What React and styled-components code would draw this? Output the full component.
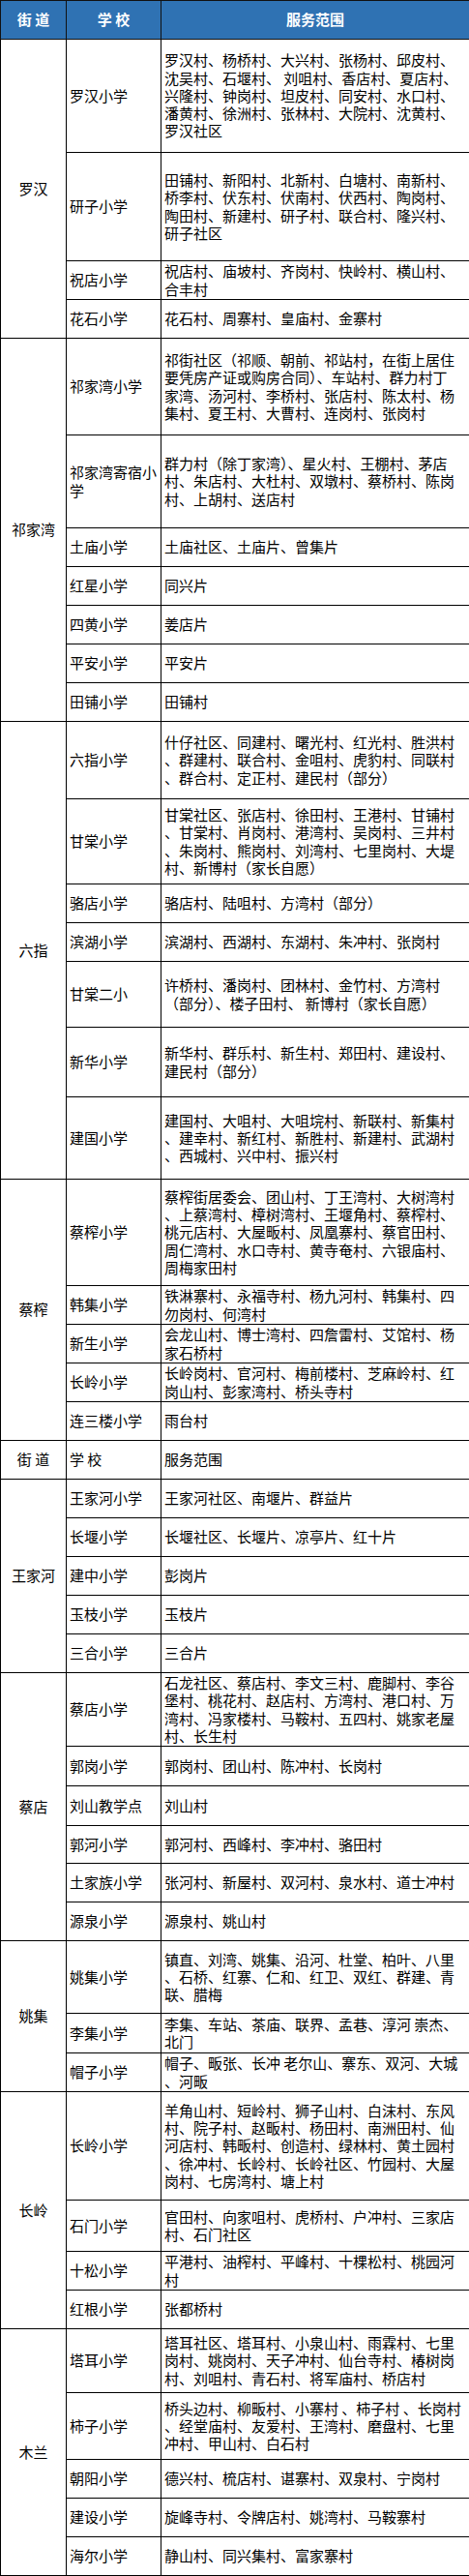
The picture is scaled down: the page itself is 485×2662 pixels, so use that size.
import React from 'react';
import styled, { createGlobalStyle } from 'styled-components';

const Global = createGlobalStyle`
  html, body { margin: 0; padding: 0; background: #fff; }
  body { font-family: "Noto Sans CJK SC", "Noto Sans", sans-serif; color: #000; }
`;

const Table = styled.table`
  width: 485px;
  table-layout: fixed;
  border-collapse: collapse;
  font-size: 15px;
  line-height: 18.3px;
`;

const Row = styled.tr`
  height: ${p => p.$h}px;
`;

const HeadCell = styled.th`
  background: #2f72b3;
  color: #fff;
  font-weight: 700;
  font-size: 15px;
  text-align: center;
  vertical-align: middle;
  border: 1px solid #111;
  padding: 0;
  white-space: pre;
`;

const StreetCell = styled.td`
  border: 1px solid #000;
  text-align: center;
  vertical-align: middle;
  padding: 0;
  white-space: pre;
`;

const SchoolCell = styled.td`
  border: 1px solid #000;
  text-align: left;
  vertical-align: middle;
  padding: 0 0 0 3px;
  white-space: pre;
`;

const AreaCell = styled.td`
  border: 1px solid #000;
  text-align: left;
  vertical-align: middle;
  padding: 0 0 0 3px;
`;

const Line = styled.span`
  display: block;
  white-space: pre;
`;

const groups = [
  {
    street: '罗汉',
    rows: [
      { s: ['罗汉小学'], h: 117, l: ['罗汉村、杨桥村、大兴村、张杨村、邱皮村、', '沈吴村、石堰村、 刘咀村、香店村、夏店村、', '兴隆村、钟岗村、坦皮村、同安村、水口村、', '潘黄村、徐洲村、张林村、大院村、沈黄村、', '罗汉社区'] },
      { s: ['研子小学'], h: 112, l: ['田铺村、新阳村、北新村、白塘村、南新村、', '桥李村、伏东村、伏南村、伏西村、陶岗村、', '陶田村、新建村、研子村、联合村、隆兴村、', '研子社区'] },
      { s: ['祝店小学'], h: 40, l: ['祝店村、庙坡村、齐岗村、快岭村、横山村、', '合丰村'] },
      { s: ['花石小学'], h: 40, l: ['花石村、周寨村、皇庙村、金寨村'] },
    ],
  },
  {
    street: '祁家湾',
    rows: [
      { s: ['祁家湾小学'], h: 100, l: ['祁街社区（祁顺、朝前、祁站村，在街上居住', '要凭房产证或购房合同）、车站村、群力村丁', '家湾、汤河村、李桥村、张店村、陈太村、杨', '集村、夏王村、大曹村、连岗村、张岗村'] },
      { s: ['祁家湾寄宿小', '学'], h: 96, l: ['群力村（除丁家湾）、星火村、王棚村、茅店', '村、朱店村、大杜村、双墩村、蔡桥村、陈岗', '村、上胡村、送店村'] },
      { s: ['土庙小学'], h: 40, l: ['土庙社区、土庙片、曾集片'] },
      { s: ['红星小学'], h: 40, l: ['同兴片'] },
      { s: ['四黄小学'], h: 40, l: ['姜店片'] },
      { s: ['平安小学'], h: 40, l: ['平安片'] },
      { s: ['田铺小学'], h: 40, l: ['田铺村'] },
    ],
  },
  {
    street: '六指',
    rows: [
      { s: ['六指小学'], h: 80, l: ['什仔社区、同建村、曙光村、红光村、胜洪村', '、群建村、联合村、金咀村、虎豹村、同联村', '、群合村、定正村、建民村（部分）'] },
      { s: ['甘棠小学'], h: 88, l: ['甘棠社区、张店村、徐田村、王港村、甘铺村', '、甘棠村、肖岗村、港湾村、吴岗村、三井村', '、朱岗村、熊岗村、刘湾村、七里岗村、大堤', '村、新博村（家长自愿）'] },
      { s: ['骆店小学'], h: 40, l: ['骆店村、陆咀村、方湾村（部分）'] },
      { s: ['滨湖小学'], h: 40, l: ['滨湖村、西湖村、东湖村、朱冲村、张岗村'] },
      { s: ['甘棠二小'], h: 68, l: ['许桥村、潘岗村、团林村、金竹村、方湾村', '（部分）、楼子田村、 新博村（家长自愿）'] },
      { s: ['新华小学'], h: 72, l: ['新华村、群乐村、新生村、郑田村、建设村、', '建民村（部分）'] },
      { s: ['建国小学'], h: 85, l: ['建国村、大咀村、大咀垸村、新联村、新集村', '、建幸村、新红村、新胜村、新建村、武湖村', '、西城村、兴中村、振兴村'] },
    ],
  },
  {
    street: '蔡榨',
    rows: [
      { s: ['蔡榨小学'], h: 110, l: ['蔡榨街居委会、团山村、丁王湾村、大树湾村', '、上蔡湾村、樟树湾村、王堰角村、蔡榨村、', '桃元店村、大屋畈村、凤凰寨村、蔡官田村、', '周仁湾村、水口寺村、黄寺奄村、六银庙村、', '周梅家田村'] },
      { s: ['韩集小学'], h: 40, l: ['铁淋寨村、永福寺村、杨九河村、韩集村、四', '勿岗村、何湾村'] },
      { s: ['新生小学'], h: 40, l: ['会龙山村、博士湾村、四詹雷村、艾馆村、杨', '家石桥村'] },
      { s: ['长岭小学'], h: 40, l: ['长岭岗村、官河村、梅前楼村、芝麻岭村、红', '岗山村、彭家湾村、桥头寺村'] },
      { s: ['连三楼小学'], h: 40, l: ['雨台村'] },
    ],
  },
  { header: true },
  {
    street: '王家河',
    rows: [
      { s: ['王家河小学'], h: 40, l: ['王家河社区、南堰片、群益片'] },
      { s: ['长堰小学'], h: 40, l: ['长堰社区、长堰片、凉亭片、红十片'] },
      { s: ['建中小学'], h: 40, l: ['彭岗片'] },
      { s: ['玉枝小学'], h: 40, l: ['玉枝片'] },
      { s: ['三合小学'], h: 40, l: ['三合片'] },
    ],
  },
  {
    street: '蔡店',
    rows: [
      { s: ['蔡店小学'], h: 76, l: ['石龙社区、蔡店村、李文三村、鹿脚村、李谷', '堡村、桃花村、赵店村、方湾村、港口村、万', '湾村、冯家楼村、马鞍村、五四村、姚家老屋', '村、长生村'] },
      { s: ['郭岗小学'], h: 41, l: ['郭岗村、团山村、陈冲村、长岗村'] },
      { s: ['刘山教学点'], h: 41, l: ['刘山村'] },
      { s: ['郭河小学'], h: 39, l: ['郭河村、西峰村、李冲村、骆田村'] },
      { s: ['土家族小学'], h: 40, l: ['张河村、新屋村、双河村、泉水村、道士冲村'] },
      { s: ['源泉小学'], h: 40, l: ['源泉村、姚山村'] },
    ],
  },
  {
    street: '姚集',
    rows: [
      { s: ['姚集小学'], h: 75, l: ['镇直、刘湾、姚集、沿河、杜堂、柏叶、八里', '、石桥、红寨、仁和、红卫、双红、群建、青', '联、腊梅'] },
      { s: ['李集小学'], h: 41, l: ['李集、车站、茶庙、联界、孟巷、淳河 崇杰、', '北门'] },
      { s: ['帽子小学'], h: 40, l: ['帽子、畈张、长冲 老尔山、寨东、双河、大城', '、河畈'] },
    ],
  },
  {
    street: '长岭',
    rows: [
      { s: ['长岭小学'], h: 112, l: ['羊角山村、短岭村、狮子山村、白沫村、东风', '村、院子村、赵畈村、杨田村、南洲田村、仙', '河店村、韩畈村、创造村、绿林村、黄土园村', '、徐冲村、长岭村、长岭社区、竹园村、大屋', '岗村、七房湾村、塘上村'] },
      { s: ['石门小学'], h: 53, l: ['官田村、向家咀村、虎桥村、户冲村、三家店', '村、石门社区'] },
      { s: ['十松小学'], h: 40, l: ['平港村、油榨村、平峰村、十棵松村、桃园河', '村'] },
      { s: ['红根小学'], h: 40, l: ['张都桥村'] },
    ],
  },
  {
    street: '木兰',
    rows: [
      { s: ['塔耳小学'], h: 66, l: ['塔耳社区、塔耳村、小泉山村、雨霖村、七里', '岗村、姚岗村、天子冲村、仙台寺村、椿树岗', '村、刘咀村、青石村、将军庙村、桥店村'] },
      { s: ['柿子小学'], h: 69, l: ['桥头边村、柳畈村、小寨村 、柿子村 、长岗村', '、经堂庙村、友爱村、王湾村、磨盘村、七里', '冲村、甲山村、白石村'] },
      { s: ['朝阳小学'], h: 40, l: ['德兴村、梳店村、谌寨村、双泉村、宁岗村'] },
      { s: ['建设小学'], h: 40, l: ['旋峰寺村、令牌店村、姚湾村、马鞍寨村'] },
      { s: ['海尔小学'], h: 40, l: ['静山村、同兴集村、富家寨村'] },
    ],
  },
];

const Lines = ({ items }) => items.map((t, i) => <Line key={i}>{t}</Line>);

export default function App() {
  return (
    <>
      <Global />
      <Table>
        <colgroup>
          <col style={{ width: 68 }} />
          <col style={{ width: 98 }} />
          <col style={{ width: 319 }} />
        </colgroup>
        <thead>
          <Row $h={40}>
            <HeadCell>街 道</HeadCell>
            <HeadCell>学 校</HeadCell>
            <HeadCell>服务范围</HeadCell>
          </Row>
        </thead>
        <tbody>
          {groups.map((g, gi) =>
            g.header ? (
              <Row key={gi} $h={40}>
                <StreetCell>街 道</StreetCell>
                <SchoolCell>学 校</SchoolCell>
                <AreaCell>服务范围</AreaCell>
              </Row>
            ) : (
              g.rows.map((r, ri) => (
                <Row key={`${gi}-${ri}`} $h={r.h}>
                  {ri === 0 && <StreetCell rowSpan={g.rows.length}>{g.street}</StreetCell>}
                  <SchoolCell><Lines items={r.s} /></SchoolCell>
                  <AreaCell><Lines items={r.l} /></AreaCell>
                </Row>
              ))
            )
          )}
        </tbody>
      </Table>
    </>
  );
}
